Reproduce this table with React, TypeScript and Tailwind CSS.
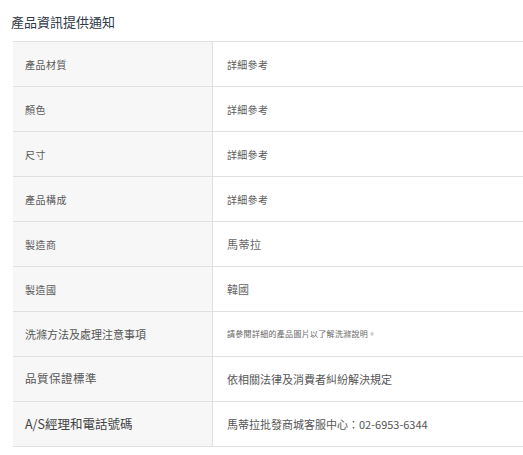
import React from "react";

type Row = { k: string; v: string; kc: string; vc: string };

const rows: Row[] = [
  { k: "產品材質", v: "詳細參考", kc: "text-[10px] tracking-[0.5px] text-[#5a5a5a]", vc: "text-[10px] tracking-[0.3px] text-[#5a5a5a]" },
  { k: "顏色", v: "詳細參考", kc: "text-[10px] tracking-[0.5px] text-[#5a5a5a]", vc: "text-[10px] tracking-[0.3px] text-[#5a5a5a]" },
  { k: "尺寸", v: "詳細參考", kc: "text-[10px] tracking-[0.5px] text-[#5a5a5a]", vc: "text-[10px] tracking-[0.3px] text-[#5a5a5a]" },
  { k: "產品構成", v: "詳細參考", kc: "text-[10px] tracking-[0.5px] text-[#5a5a5a]", vc: "text-[10px] tracking-[0.3px] text-[#5a5a5a]" },
  { k: "製造商", v: "馬蒂拉", kc: "text-[10px] tracking-[0.5px] text-[#5a5a5a]", vc: "text-[11px] tracking-[0.5px] text-[#666]" },
  { k: "製造國", v: "韓國", kc: "text-[10px] tracking-[0.5px] text-[#5a5a5a]", vc: "text-[11px] text-[#666]" },
  { k: "洗滌方法及處理注意事項", v: "請參閱詳細的產品圖片以了解洗滌說明。", kc: "text-[11px] text-[#555]", vc: "text-[8px] tracking-[0.3px] text-[#666]" },
  { k: "品質保證標準", v: "依相關法律及消費者糾紛解決規定", kc: "text-[11.5px] tracking-[0.5px] text-[#555]", vc: "text-[11px] text-[#555]" },
  { k: "A/S經理和電話號碼", v: "馬蒂拉批發商城客服中心：02-6953-6344", kc: "text-[12.5px] text-[#444]", vc: "text-[11px] text-[#555]" },
];

export default function App() {
  return (
    <div
      className="w-[523px] h-[455px] bg-white overflow-hidden"
      style={{ fontFamily: '"Noto Sans CJK TC", "Noto Sans", sans-serif' }}
    >
      <div className="pl-[11px] pt-[14px] pb-[11px] text-[13px] leading-[16px] text-[#2f3a48]">
        產品資訊提供通知
      </div>
      <div className="pl-[13px]">
        <div className="border-t border-[#e0e0e0]">
          {rows.map((r) => (
            <div key={r.k} className="grid grid-cols-[200px_1fr] h-[45px] border-b border-[#e0e0e0]">
              <div className={`bg-[#f7f7f7] border-r border-[#e0e0e0] flex items-center pl-[12px] ${r.kc}`}>
                {r.k}
              </div>
              <div className={`flex items-center pl-[14px] ${r.vc}`}>{r.v}</div>
            </div>
          ))}
        </div>
      </div>
    </div>
  );
}
